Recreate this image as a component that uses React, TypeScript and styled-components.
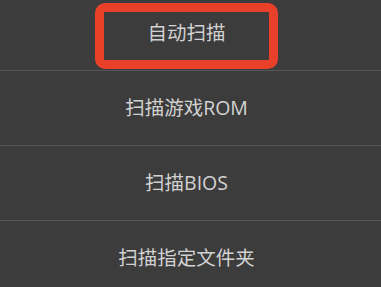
import React from "react";
import styled, { createGlobalStyle } from "styled-components";

const Global = createGlobalStyle`
  html, body {
    margin: 0;
    padding: 0;
    background: #3c3c3c;
    overflow: hidden;
  }
  body {
    font-family: "Open Sans", "Noto Sans CJK SC", sans-serif;
  }
`;

const List = styled.div`
  display: flex;
  flex-direction: column;
  margin-top: -4px;
  width: 381px;
`;

const Row = styled.div<{ $divider: boolean }>`
  position: relative;
  height: 75px;
  box-sizing: border-box;
  display: flex;
  align-items: center;
  justify-content: center;
  padding-right: 8px;
  border-bottom: ${(p) => (p.$divider ? "1.5px solid #565656" : "none")};
`;

const Label = styled.span`
  font-size: 19.5px;
  color: #d2d2d2;
  letter-spacing: 0;
  line-height: 1;
  margin-top: -1px;
`;

const Highlight = styled.div`
  position: absolute;
  left: 95px;
  top: 7px;
  width: 183px;
  height: 66px;
  box-sizing: border-box;
  border: 9px solid #e9402a;
  border-radius: 10px;
  pointer-events: none;
`;

const items = ["自动扫描", "扫描游戏ROM", "扫描BIOS", "扫描指定文件夹"];

export default function App() {
  return (
    <>
      <Global />
      <List>
        {items.map((t, i) => (
          <Row key={t} $divider={i < items.length - 1}>
            <Label>{t}</Label>
            {i === 0 && <Highlight />}
          </Row>
        ))}
      </List>
    </>
  );
}
